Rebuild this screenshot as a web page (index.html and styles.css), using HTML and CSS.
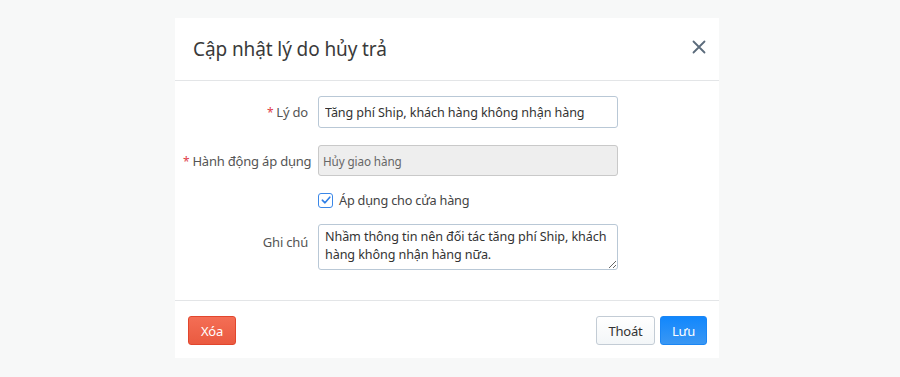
FILE: index.html
```html
<!DOCTYPE html>
<html lang="vi">
<head>
<meta charset="utf-8">
<link rel="stylesheet" href="styles.css">
</head>
<body>
<div class="modal">
  <div class="modal-header">
    <h2 class="modal-title">Cập nhật lý do hủy trả</h2>
    <button class="close" aria-label="Đóng">
      <svg width="14" height="14" viewBox="0 0 14 14"><path d="M1.5 1.5 L12.5 12.5 M12.5 1.5 L1.5 12.5" stroke="#5b6b7b" stroke-width="1.8" stroke-linecap="round" fill="none"/></svg>
    </button>
  </div>
  <div class="modal-body">
    <div class="form-row">
      <label class="label"><span class="req">*</span>Lý do</label>
      <input class="input" type="text" value="Tăng phí Ship, khách hàng không nhận hàng">
    </div>
    <div class="form-row row2">
      <label class="label"><span class="req">*</span>Hành động áp dụng</label>
      <input class="input disabled" type="text" value="Hủy giao hàng" disabled>
    </div>
    <div class="form-row row3">
      <span class="label"></span>
      <label class="check">
        <span class="box"><svg width="10" height="10" viewBox="0 0 10 10"><path d="M1.3 5.2 L4 7.8 L8.8 2.2" stroke="#2f7fe6" stroke-width="1.6" fill="none" stroke-linecap="round" stroke-linejoin="round"/></svg></span>
        Áp dụng cho cửa hàng
      </label>
    </div>
    <div class="form-row row4">
      <label class="label">Ghi chú</label>
      <textarea class="input textarea">Nhầm thông tin nên đối tác tăng phí Ship, khách hàng không nhận hàng nữa.</textarea>
    </div>
  </div>
  <div class="modal-footer">
    <button class="btn btn-danger">Xóa</button>
    <div class="right">
      <button class="btn btn-default">Thoát</button>
      <button class="btn btn-primary">Lưu</button>
    </div>
  </div>
</div>
</body>
</html>
```

FILE: styles.css
```css
* { box-sizing: border-box; }
html, body { margin: 0; padding: 0; }
body {
  background: #f7f8f8;
  font-family: "Noto Sans", "Open Sans", sans-serif;
  color: #333;
  width: 900px;
  height: 377px;
  overflow: hidden;
}
.modal {
  margin: 18px 0 0 175px;
  width: 544px;
  background: #fff;
}
.modal-header {
  height: 63px;
  border-bottom: 1px solid #e3e5e7;
  display: flex;
  align-items: center;
  justify-content: space-between;
  padding: 0 13px 0 18px;
}
.modal-title {
  margin: 0;
  font-size: 19px;
  font-weight: 400;
  color: #3a3a3a;
  letter-spacing: -0.1px;
}
.close {
  border: 0;
  background: none;
  padding: 0;
  width: 14px;
  height: 14px;
  display: flex;
  margin-top: -4px;
}
.modal-body {
  padding: 15px 8px 30px;
  border-bottom: 1px solid #e3e5e7;
}
.form-row {
  display: grid;
  grid-template-columns: 125px 300px;
  column-gap: 10px;
  align-items: center;
}
.row2 { margin-top: 17px; }
.row3 { margin-top: 15px; }
.row4 { margin-top: 15px; align-items: start; }
.row4 .label { padding-top: 9px; }
.label {
  text-align: right;
  font-size: 13px;
  color: #555;
  white-space: nowrap;
  letter-spacing: -0.2px;
}
.req { color: #e0404a; margin-right: 3px; font-size: 12px; }
.input {
  width: 300px;
  height: 32px;
  border: 1px solid #b9c8d6;
  border-radius: 3px;
  padding: 0 6px;
  font-family: inherit;
  font-size: 12.6px;
  color: #333;
  background: #fff;
  letter-spacing: -0.1px;
}
.input.disabled {
  height: 31px;
  background: #eeeeee;
  border-color: #c9c9c9;
  padding: 0 4px;
  font-size: 11.7px;
  color: #666;
}
.textarea {
  height: 46px;
  padding: 3px 6px;
  line-height: 18px;
  resize: both;
  display: block;
}
.check {
  display: flex;
  align-items: center;
  gap: 6px;
  font-size: 12.7px;
  color: #444;
  letter-spacing: -0.2px;
}
.box {
  width: 15px;
  height: 15px;
  border: 1.5px solid #3a87e8;
  border-radius: 3px;
  display: flex;
  align-items: center;
  justify-content: center;
}
.modal-footer {
  display: flex;
  justify-content: space-between;
  align-items: center;
  padding: 15px 12px 13px 13px;
}
.right { display: flex; gap: 5px; }
.btn {
  height: 29px;
  border-radius: 3px;
  font-family: inherit;
  font-size: 13px;
  padding: 0 6px;
  border: 1px solid;
  letter-spacing: -0.2px;
}
.btn-danger {
  width: 48px;
  background: linear-gradient(#f46e55, #ea5a40);
  border-color: #e2462d;
  color: #fff;
}
.btn-default {
  width: 59px;
  background: linear-gradient(#ffffff, #f3f6f8);
  border-color: #c3ccd5;
  color: #333;
}
.btn-primary {
  width: 47px;
  background: linear-gradient(#1187fd, #3a97f3);
  border-color: #1a86f5;
  color: #fff;
}
```
